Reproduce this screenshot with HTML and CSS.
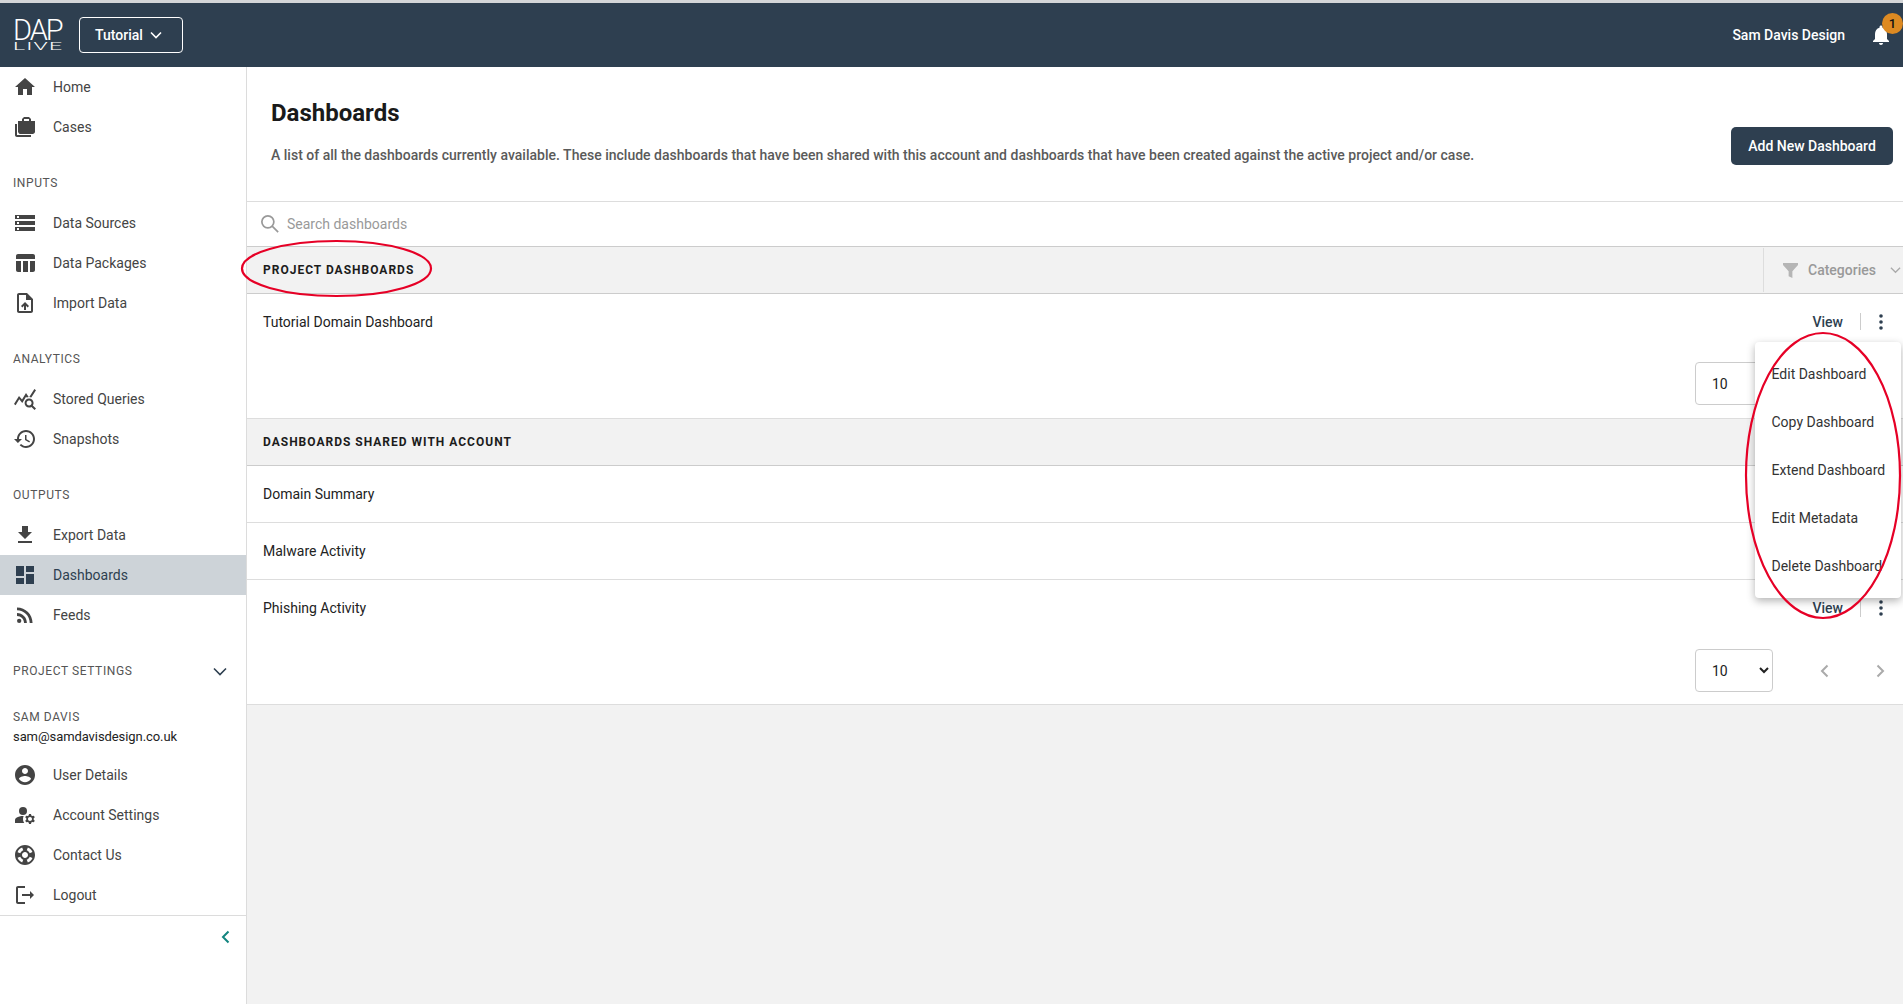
FILE: index.html
```html
<!DOCTYPE html>
<html lang="en">
<head>
<meta charset="utf-8">
<title>Dashboards</title>
<link rel="stylesheet" href="styles.css">
</head>
<body>
<div class="app">
  <header class="topbar">
    <div class="logo"><span class="logo-dap">DAP</span><span class="logo-live">LIVE</span></div>
    <button class="project-btn">Tutorial
      <svg class="chev-s" viewBox="0 0 12 8"><path d="M1 1.5l5 5 5-5" fill="none" stroke="currentColor" stroke-width="1.6"/></svg>
    </button>
    <div class="top-right">
      <span class="account">Sam Davis Design</span>
      <span class="bell">
        <svg viewBox="0 0 24 24"><path d="M12 22c1.1 0 2-.9 2-2h-4c0 1.1.9 2 2 2zm6-6v-5c0-3.07-1.63-5.64-4.5-6.32V4c0-.83-.67-1.5-1.5-1.5s-1.5.67-1.5 1.5v.68C7.64 5.36 6 7.92 6 11v5l-2 2v1h16v-1l-2-2z"/></svg>
        <span class="badge">1</span>
      </span>
    </div>
  </header>
  <div class="body-grid">
    <aside class="sidebar">
      <nav class="nav nav-first">
        <a class="item"><svg viewBox="0 0 24 24"><path d="M10 20v-6h4v6h5v-8h3L12 3 2 12h3v8z"/></svg>Home</a>
        <a class="item"><svg viewBox="0 0 24 24"><path d="M18 6V4l-2-2h-5L9 4v2H5v11s1 2 2 2h13s2-.94 2-2V6h-4zM4 9H2v11c0 1.11.89 2 2 2h14v-2H4V9zm7-5h5v2h-5V4z"/></svg>Cases</a>
      </nav>
      <div class="label">Inputs</div>
      <nav class="nav">
        <a class="item"><svg viewBox="0 0 24 24"><path d="M2 20h20v-4H2v4zm2-3h2v2H4v-2zM2 4v4h20V4H2zm4 3H4V5h2v2zm-4 7h20v-4H2v4zm2-3h2v2H4v-2z"/></svg>Data Sources</a>
        <a class="item"><svg viewBox="0 0 24 24"><path d="M10 10.02h5V21h-5zM17 21h3c1.1 0 2-.9 2-2v-9h-5v11zm3-18H5c-1.1 0-2 .9-2 2v3h19V5c0-1.1-.9-2-2-2zM3 19c0 1.1.9 2 2 2h3V10H3v9z"/></svg>Data Packages</a>
        <a class="item"><svg viewBox="0 0 24 24"><path d="M14 2H6c-1.1 0-1.99.9-1.99 2L4 20c0 1.1.89 2 1.99 2H18c1.1 0 2-.9 2-2V8l-6-6zm4 18H6V4h7v5h5v11zM8 15.01l1.41 1.41L11 14.84V19h2v-4.16l1.59 1.59L16 15.01 12.01 11 8 15.01z"/></svg>Import Data</a>
      </nav>
      <div class="label">Analytics</div>
      <nav class="nav">
        <a class="item"><svg viewBox="0 0 24 24"><path d="M19.88 18.47c.44-.7.7-1.51.7-2.39 0-2.49-2.01-4.5-4.5-4.5s-4.5 2.01-4.5 4.5 2.01 4.5 4.49 4.5c.88 0 1.7-.26 2.39-.7L21.58 23 23 21.58l-3.12-3.11zm-3.8.11c-1.38 0-2.5-1.12-2.5-2.5s1.12-2.5 2.5-2.5 2.5 1.12 2.5 2.5-1.12 2.5-2.5 2.5zm-.36-8.5c-.74.02-1.45.18-2.1.45l-.55-.83-3.8 6.18-3.01-3.52-3.63 5.81L1 17l5-8 3 3.5L13 6l2.72 4.08zm2.59.5c-.64-.28-1.33-.45-2.05-.49L21.38 2 23 3.18l-4.69 7.4z"/></svg>Stored Queries</a>
        <a class="item"><svg viewBox="0 0 24 24"><path d="M13 3c-4.97 0-9 4.03-9 9H1l3.89 3.89.07.14L9 12H6c0-3.87 3.13-7 7-7s7 3.13 7 7-3.13 7-7 7c-1.93 0-3.68-.79-4.94-2.06l-1.42 1.42C8.27 19.99 10.51 21 13 21c4.97 0 9-4.03 9-9s-4.03-9-9-9zm-1 5v5l4.28 2.54.72-1.21-3.5-2.08V8H12z"/></svg>Snapshots</a>
      </nav>
      <div class="label">Outputs</div>
      <nav class="nav">
        <a class="item"><svg viewBox="0 0 24 24"><path d="M19 9h-4V3H9v6H5l7 7 7-7zM5 18v2h14v-2H5z"/></svg>Export Data</a>
        <a class="item active"><svg viewBox="0 0 24 24"><path d="M3 13h8V3H3v10zm0 8h8v-6H3v6zm10 0h8V11h-8v10zm0-18v6h8V3h-8z"/></svg>Dashboards</a>
        <a class="item"><svg viewBox="0 0 24 24"><circle cx="6.18" cy="17.82" r="2.18"/><path d="M4 4.44v2.83c7.03 0 12.73 5.7 12.73 12.73h2.83c0-8.59-6.97-15.56-15.56-15.56zm0 5.66v2.83c3.9 0 7.07 3.17 7.07 7.07h2.83c0-5.47-4.43-9.9-9.9-9.9z"/></svg>Feeds</a>
      </nav>
      <div class="label label-row">Project Settings
        <svg class="chev-nav" viewBox="0 0 14 9"><path d="M1 1.5l6 6 6-6" fill="none" stroke="#2e3f50" stroke-width="1.6"/></svg>
      </div>
      <div class="user-name">Sam Davis</div>
      <div class="user-mail">sam@samdavisdesign.co.uk</div>
      <nav class="nav">
        <a class="item"><svg viewBox="0 0 24 24"><path d="M12 2C6.48 2 2 6.48 2 12s4.48 10 10 10 10-4.48 10-10S17.52 2 12 2zm0 3c1.66 0 3 1.34 3 3s-1.34 3-3 3-3-1.34-3-3 1.34-3 3-3zm0 14.2c-2.5 0-4.71-1.28-6-3.22.03-1.99 4-3.08 6-3.08 1.99 0 5.97 1.09 6 3.08-1.29 1.94-3.5 3.22-6 3.22z"/></svg>User Details</a>
        <a class="item"><svg viewBox="0 0 24 24"><circle cx="10" cy="8" r="4"/><path d="M10.67 13.02c-.22-.01-.44-.02-.67-.02-2.42 0-4.68.67-6.61 1.82-.88.52-1.39 1.5-1.39 2.53V20h9.26c-.79-1.13-1.26-2.51-1.26-4 0-1.07.25-2.07.67-2.98z"/><path d="M20.75 16c0-.22-.03-.42-.06-.63l1.14-1.01-1-1.73-1.45.49c-.32-.27-.68-.48-1.08-.63L18 11h-2l-.3 1.49c-.4.15-.76.36-1.08.63l-1.45-.49-1 1.73 1.14 1.01c-.03.21-.06.41-.06.63s.03.42.06.63l-1.14 1.01 1 1.73 1.45-.49c.32.27.68.48 1.08.63L16 21h2l.3-1.49c.4-.15.76-.36 1.08-.63l1.45.49 1-1.73-1.14-1.01c.03-.21.06-.41.06-.63zM17 18c-1.1 0-2-.9-2-2s.9-2 2-2 2 .9 2 2-.9 2-2 2z"/></svg>Account Settings</a>
        <a class="item"><svg viewBox="0 0 24 24"><path d="M12 2C6.48 2 2 6.48 2 12s4.48 10 10 10 10-4.48 10-10S17.52 2 12 2zm7.46 7.12-2.78 1.15c-.51-1.36-1.58-2.44-2.95-2.94l1.15-2.78c2.1.8 3.77 2.47 4.58 4.57zM12 15c-1.66 0-3-1.34-3-3s1.34-3 3-3 3 1.34 3 3-1.34 3-3 3zM9.13 4.54l1.17 2.78c-1.38.5-2.47 1.59-2.98 2.97L4.54 9.13c.81-2.11 2.48-3.78 4.59-4.59zM4.54 14.87l2.78-1.15c.51 1.38 1.59 2.46 2.97 2.96l-1.17 2.78c-2.1-.81-3.77-2.48-4.58-4.59zm10.34 4.59-1.15-2.78c1.37-.51 2.45-1.59 2.95-2.97l2.78 1.17c-.81 2.1-2.48 3.77-4.58 4.58z"/></svg>Contact Us</a>
        <a class="item"><svg viewBox="0 0 24 24"><path d="M5 5h7V3H5c-1.1 0-2 .9-2 2v14c0 1.1.9 2 2 2h7v-2H5V5zm16 7-4-4v3H9v2h8v3l4-4z"/></svg>Logout</a>
      </nav>
      <div class="collapse">
        <svg viewBox="0 0 9 14"><path d="M7.5 1.5L2 7l5.5 5.5" fill="none" stroke="#12857f" stroke-width="2"/></svg>
      </div>
    </aside>
    <main class="main">
      <div class="panel">
        <div class="page-head">
          <div>
            <h1 class="title">Dashboards</h1>
            <p class="desc">A list of all the dashboards currently available. These include dashboards that have been shared with this account and dashboards that have been created against the active project and/or case.</p>
          </div>
          <button class="add-btn">Add New Dashboard</button>
        </div>
        <div class="search">
          <svg viewBox="2 2 21 21"><circle cx="10" cy="10" r="7" fill="none" stroke="#999" stroke-width="2"/><path d="M15 15l7 7" stroke="#999" stroke-width="2" fill="none"/></svg>
          <span>Search dashboards</span>
        </div>
        <div class="sec-head">
          <span>Project Dashboards</span>
          <div class="cats">
            <svg class="funnel" viewBox="0 0 24 24"><path d="M0 0h24v3l-9 10v11l-6-3v-8L0 3z"/></svg>
            <span class="cats-text">Categories</span>
            <svg class="cats-chev" viewBox="0 0 12 8"><path d="M1 1.5l5 5 5-5" fill="none" stroke="#aaa" stroke-width="1.4"/></svg>
          </div>
        </div>
        <div class="row row-plain row-first"><span>Tutorial Domain Dashboard</span>
          <div class="actions"><a class="view">View</a><i class="sep"></i><svg class="dots" viewBox="0 0 4 16"><circle cx="2" cy="2" r="1.8"/><circle cx="2" cy="8" r="1.8"/><circle cx="2" cy="14" r="1.8"/></svg></div>
        </div>
        <div class="pager pager-first">
          <select class="size"><option>10</option></select>
          <svg class="pg" viewBox="0 0 9 14"><path d="M7.5 1.5L2 7l5.5 5.5" fill="none" stroke="#aaa" stroke-width="2"/></svg>
          <svg class="pg" viewBox="0 0 9 14"><path d="M1.5 1.5L7 7l-5.5 5.5" fill="none" stroke="#aaa" stroke-width="2"/></svg>
        </div>
        <div class="sec-head sec-top"><span>Dashboards Shared With Account</span></div>
        <div class="row"><span>Domain Summary</span></div>
        <div class="row"><span>Malware Activity</span></div>
        <div class="row row-plain"><span>Phishing Activity</span>
          <div class="actions"><a class="view">View</a><i class="sep"></i><svg class="dots" viewBox="0 0 4 16"><circle cx="2" cy="2" r="1.8"/><circle cx="2" cy="8" r="1.8"/><circle cx="2" cy="14" r="1.8"/></svg></div>
        </div>
        <div class="pager">
          <select class="size"><option>10</option></select>
          <svg class="pg" viewBox="0 0 9 14"><path d="M7.5 1.5L2 7l5.5 5.5" fill="none" stroke="#aaa" stroke-width="2"/></svg>
          <svg class="pg" viewBox="0 0 9 14"><path d="M1.5 1.5L7 7l-5.5 5.5" fill="none" stroke="#aaa" stroke-width="2"/></svg>
        </div>
      </div>
    </main>
  </div>
  <ul class="menu">
    <li>Edit Dashboard</li>
    <li>Copy Dashboard</li>
    <li>Extend Dashboard</li>
    <li>Edit Metadata</li>
    <li>Delete Dashboard</li>
  </ul>
  <svg class="oval oval-a" viewBox="0 0 191 57"><ellipse cx="95.5" cy="28.5" rx="94.5" ry="27.5"/></svg>
  <svg class="oval oval-b" viewBox="0 0 156 287"><ellipse cx="78" cy="143.5" rx="77" ry="142.5"/></svg>
</div>
</body>
</html>
```
FILE: styles.css
```css
* { box-sizing: border-box; }
html, body { margin: 0; height: 100%; }
body { font-family: Roboto, "Liberation Sans", sans-serif; font-size: 14px; color: #212529; background: #fff; overflow: hidden; }
.app { position: relative; height: 100vh; display: flex; flex-direction: column; border-top: 3px solid #d4d6d8; }
.topbar { height: 64px; flex: none; background: #2e3f50; color: #fff; display: flex; align-items: center; padding-left: 13px; }
.logo { width: 50px; height: 32px; display: flex; flex-direction: column; color: #fff; margin-right: 16px; overflow: visible; }
.logo-dap { height: 23px; font-size: 29px; font-weight: 300; line-height: 23px; letter-spacing: -2px; }
.logo-live { height: 8px; margin-top: 1px; font-size: 10px; font-weight: 300; line-height: 8px; letter-spacing: .5px; transform: scaleX(2.3); transform-origin: left center; }
.project-btn { width: 104px; height: 36px; border: 1px solid #fff; border-radius: 4px; background: transparent; color: #fff; font: 500 14px Roboto, sans-serif; display: flex; align-items: center; justify-content: flex-start; gap: 7px; padding: 0 0 0 15px; }
.chev-s { width: 12px; height: 8px; }
.top-right { margin-left: auto; display: flex; align-items: center; }
.account { font-weight: 500; }
.bell { position: relative; width: 24px; height: 24px; margin-left: 24px; margin-right: 10px; }
.bell svg { width: 24px; height: 24px; fill: #fff; display: block; }
.badge { position: absolute; left: 13px; top: -10px; width: 21px; height: 21px; border-radius: 50%; background: #dd8a22; color: #111; font-size: 13px; font-weight: 500; display: flex; align-items: center; justify-content: center; }
.body-grid { flex: 1; display: grid; grid-template-columns: 247px 1fr; min-height: 0; }
.sidebar { border-right: 1px solid #dcdcdc; background: #fff; color: #444; }
.nav { display: flex; flex-direction: column; }
.nav-first { margin-top: 0; }
.item { height: 40px; display: flex; align-items: center; padding-left: 13px; gap: 16px; color: #444; }
.item svg { width: 24px; height: 24px; fill: #444; flex: none; }
.item.active { background: #cdd3d8; color: #2e3f50; }
.item.active svg { fill: #2e3f50; }
.label { height: 15px; margin: 29px 0 12px 13px; font-size: 12px; line-height: 15px; letter-spacing: .6px; text-transform: uppercase; color: #555; }
.label-row { display: flex; justify-content: space-between; align-items: center; padding-right: 19px; margin-bottom: 0; }
.chev-nav { width: 14px; height: 9px; }
.user-name { margin: 31px 0 0 13px; font-size: 12px; line-height: 15px; letter-spacing: .6px; text-transform: uppercase; color: #555; }
.user-mail { margin: 4px 0 11px 13px; font-size: 13px; line-height: 15px; letter-spacing: -.08px; color: #222; }
.collapse { border-top: 1px solid #dcdcdc; height: 42px; display: flex; align-items: center; justify-content: flex-end; padding-right: 16px; }
.collapse svg { width: 9px; height: 14px; }
.main { background: #f2f2f2; min-width: 0; }
.panel { background: #fff; border-bottom: 1px solid #ddd; }
.page-head { height: 135px; display: flex; justify-content: space-between; align-items: flex-start; padding: 0 10px 0 24px; border-bottom: 1px solid #ddd; }
.title { margin: 31px 0 0; font-size: 24px; line-height: 30px; font-weight: 700; color: #1a1a1a; }
.desc { margin: 18px 0 0; font-size: 14px; line-height: 18px; font-weight: 500; color: #5a5a5a; letter-spacing: .01px; }
.add-btn { margin-top: 60px; width: 162px; height: 38px; border: 0; border-radius: 5px; background: #2e3f50; color: #fff; font: 500 14px Roboto, sans-serif; padding: 0; }
.search { height: 44px; display: flex; align-items: center; padding-left: 14px; gap: 8px; color: #999; }
.search svg { width: 18px; height: 18px; }
.sec-head { height: 48px; display: flex; align-items: center; justify-content: space-between; padding-left: 16px; background: #f2f2f2; border-top: 1px solid #ccc; border-bottom: 1px solid #ccc; font-size: 12px; font-weight: 700; letter-spacing: 1px; text-transform: uppercase; color: #1c1c1c; }
.sec-top { border-top-color: #ddd; }
.cats { width: 140px; height: 44px; display: flex; align-items: center; border-left: 1px solid #ddd; padding-left: 19px; letter-spacing: 0; }
.funnel { width: 15px; height: 15px; fill: #b5b5b5; flex: none; }
.cats-text { margin-left: 10px; font-size: 14px; font-weight: 500; text-transform: none; color: #999; }
.cats-chev { width: 11px; height: 8px; margin-left: 14px; flex: none; }
.row { height: 57px; display: flex; align-items: center; justify-content: space-between; padding-left: 16px; border-bottom: 1px solid #ddd; color: #222; }
.row-plain { border-bottom: 0; padding-bottom: 1px; }
.row-first { height: 56px; }
.actions { display: flex; align-items: center; padding-right: 20px; }
.view { font-weight: 500; color: #2e3f50; }
.sep { width: 1px; height: 17px; background: #ccc; margin: 0 18px 0 17px; }
.dots { width: 4px; height: 16px; fill: #2e3f50; }
.pager { height: 67px; display: flex; align-items: flex-start; padding: 12px 0 0 1448px; }
.pager-first { height: 68px; }
.size { width: 78px; height: 43px; background: #fff; border: 1px solid #ccc; border-radius: 4px; font: 14px Roboto, sans-serif; color: #222; padding-left: 12px; }
.pg { width: 9px; height: 14px; margin-top: 15px; margin-left: 47px; flex: none; }
.menu { position: absolute; left: 1755px; top: 339px; width: 146px; height: 256px; margin: 0; padding: 8px 0; list-style: none; background: #fff; border-radius: 4px; box-shadow: 0 3px 8px rgba(0,0,0,.3); color: #333; }
.menu li { height: 48px; display: flex; align-items: center; padding-left: 16.5px; white-space: nowrap; }
.oval { position: absolute; fill: none; stroke: #e60026; stroke-width: 2.2; overflow: visible; pointer-events: none; }
.oval-a { left: 241px; top: 237px; width: 191px; height: 57px; }
.oval-b { left: 1745px; top: 329px; width: 156px; height: 287px; }
```
